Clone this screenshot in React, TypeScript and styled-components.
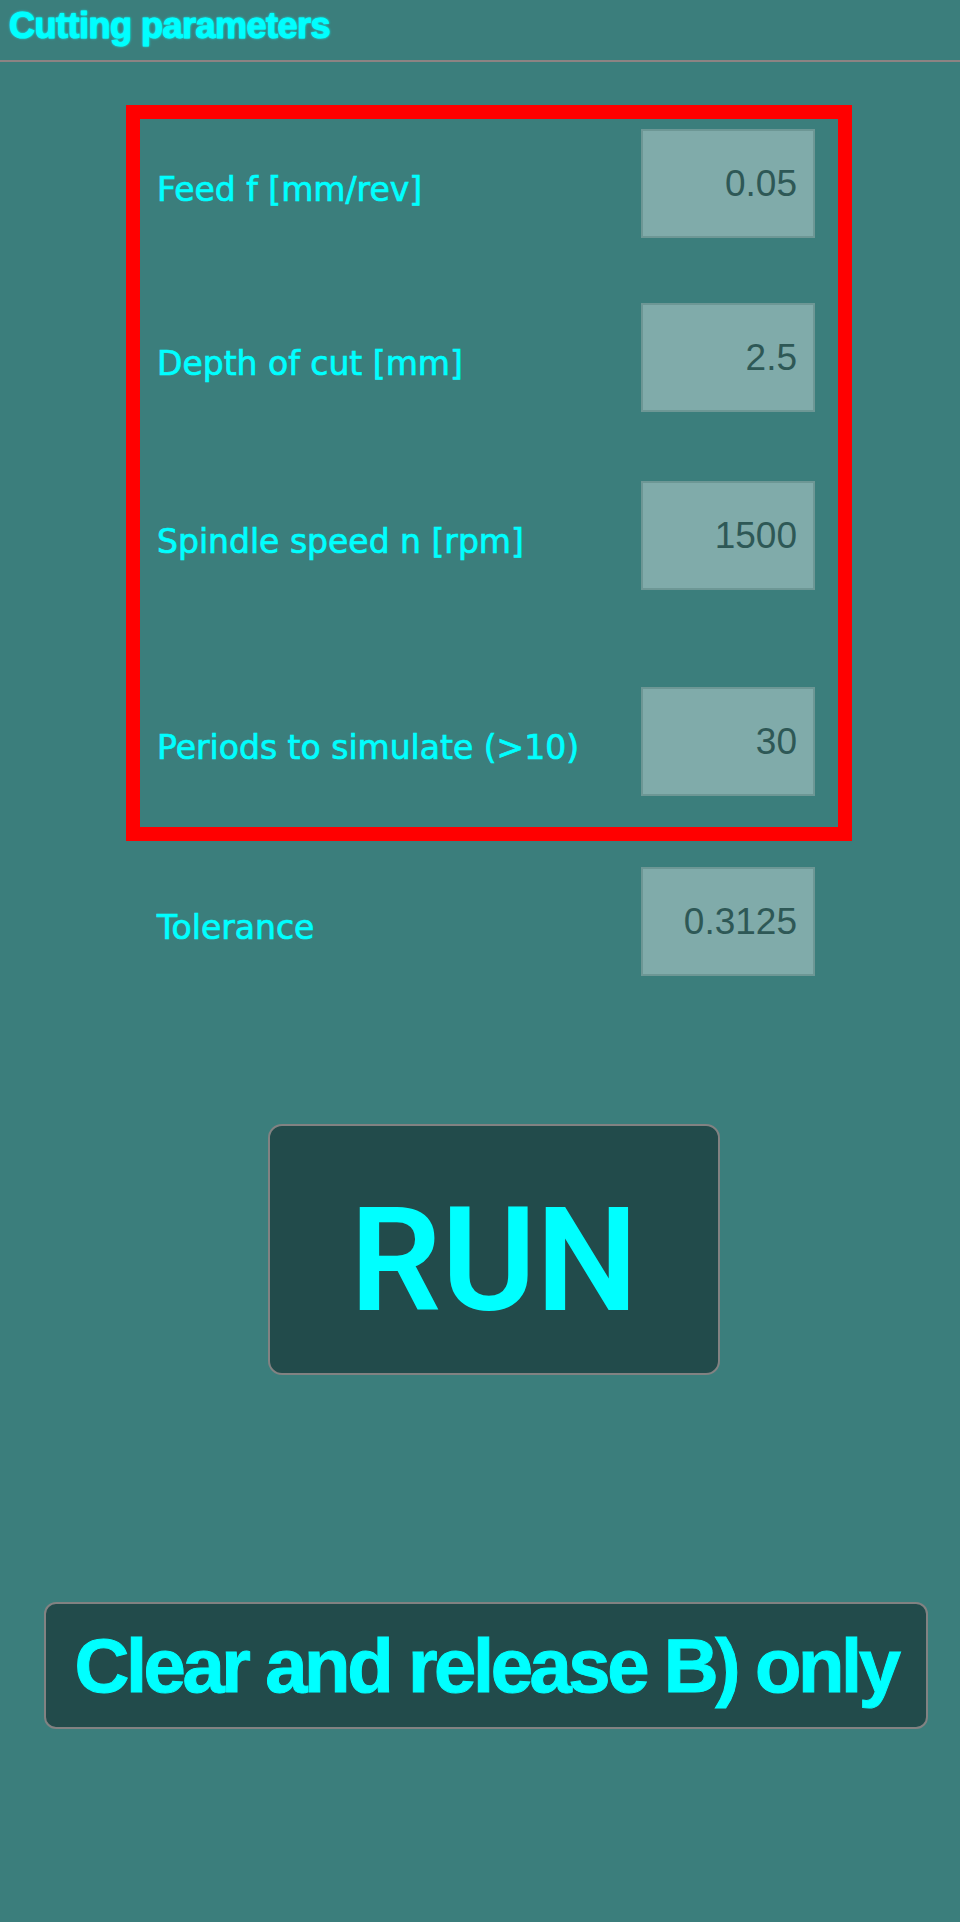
import React from "react";
import styled, { createGlobalStyle } from "styled-components";

const GlobalStyle = createGlobalStyle`
  html, body {
    margin: 0;
    padding: 0;
    background: #3b7e7c;
  }
  * { box-sizing: border-box; }
`;

const Page = styled.div`
  width: 960px;
  min-height: 1922px;
  background: #3b7e7c;
  display: flex;
  flex-direction: column;
`;

const Header = styled.div`
  height: 62px;
  padding: 8px 0 0 9px;
  border-bottom: 2px solid #8d8383;
  font-family: "Liberation Sans", Arial, sans-serif;
  font-weight: 700;
  font-size: 36px;
  line-height: 36px;
  letter-spacing: -0.5px;
  color: #00ffff;
  -webkit-text-stroke: 1px #00ffff;
  text-shadow: 0 0 3px rgba(0, 255, 255, 0.9), 0 0 2px #00ffff;
`;

const Form = styled.div`
  margin-left: 126px;
  width: 726px;
  display: flex;
  flex-direction: column;
`;

const RedBox = styled.div`
  margin-top: 43px;
  border: 14px solid #ff0000;
  padding: 10px 23px 31px 17px;
  display: flex;
  flex-direction: column;
`;

const Row = styled.div<{ $top?: number }>`
  display: flex;
  align-items: center;
  justify-content: space-between;
  margin-top: ${(p) => p.$top ?? 0}px;
`;

const OuterRow = styled(Row)`
  padding: 0 37px 0 31px;
`;

const Label = styled.div`
  margin-top: 12px;
  font-family: "DejaVu Sans", Verdana, sans-serif;
  font-size: 33px;
  line-height: 33px;
  color: #00ffff;
  -webkit-text-stroke: 0.7px #00ffff;
  white-space: nowrap;
`;

const ValueBox = styled.div`
  width: 174px;
  height: 109px;
  background: #80abaa;
  border: 2px solid #6d9795;
  display: flex;
  align-items: center;
  justify-content: flex-end;
  padding-right: 16px;
  font-family: "Liberation Sans", Arial, sans-serif;
  font-size: 37px;
  line-height: 37px;
  color: #2e5856;
`;

const RunButton = styled.button`
  margin: 148px 0 0 268px;
  width: 452px;
  height: 251px;
  background: #224b4b;
  border: 2px solid #828282;
  border-radius: 14px;
  display: flex;
  align-items: center;
  justify-content: center;
  padding: 22px 0 0 0;
  font-family: Roboto, "Liberation Sans", sans-serif;
  font-weight: 600;
  font-size: 144px;
  line-height: 144px;
  color: #00ffff;
  cursor: pointer;
`;

const ClearButton = styled.button`
  margin: 227px 0 0 44px;
  width: 884px;
  height: 127px;
  background: #224b4b;
  border: 2px solid #828282;
  border-radius: 12px;
  display: flex;
  align-items: center;
  justify-content: center;
  padding: 0;
  font-family: "Liberation Sans", Arial, sans-serif;
  font-weight: 700;
  font-size: 76px;
  line-height: 76px;
  letter-spacing: -3.4px;
  color: #00ffff;
  -webkit-text-stroke: 1px #00ffff;
  white-space: nowrap;
  cursor: pointer;
`;

const rows = [
  { label: "Feed f [mm/rev]", value: "0.05", top: 0 },
  { label: "Depth of cut [mm]", value: "2.5", top: 65 },
  { label: "Spindle speed n [rpm]", value: "1500", top: 69 },
  { label: "Periods to simulate (>10)", value: "30", top: 97 },
];

export default function App() {
  return (
    <>
      <GlobalStyle />
      <Page>
        <Header>Cutting parameters</Header>
        <Form>
          <RedBox>
            {rows.map((r) => (
              <Row key={r.label} $top={r.top}>
                <Label>{r.label}</Label>
                <ValueBox>{r.value}</ValueBox>
              </Row>
            ))}
          </RedBox>
          <OuterRow $top={26}>
            <Label>Tolerance</Label>
            <ValueBox>0.3125</ValueBox>
          </OuterRow>
        </Form>
        <RunButton>RUN</RunButton>
        <ClearButton>Clear and release B) only</ClearButton>
      </Page>
    </>
  );
}
